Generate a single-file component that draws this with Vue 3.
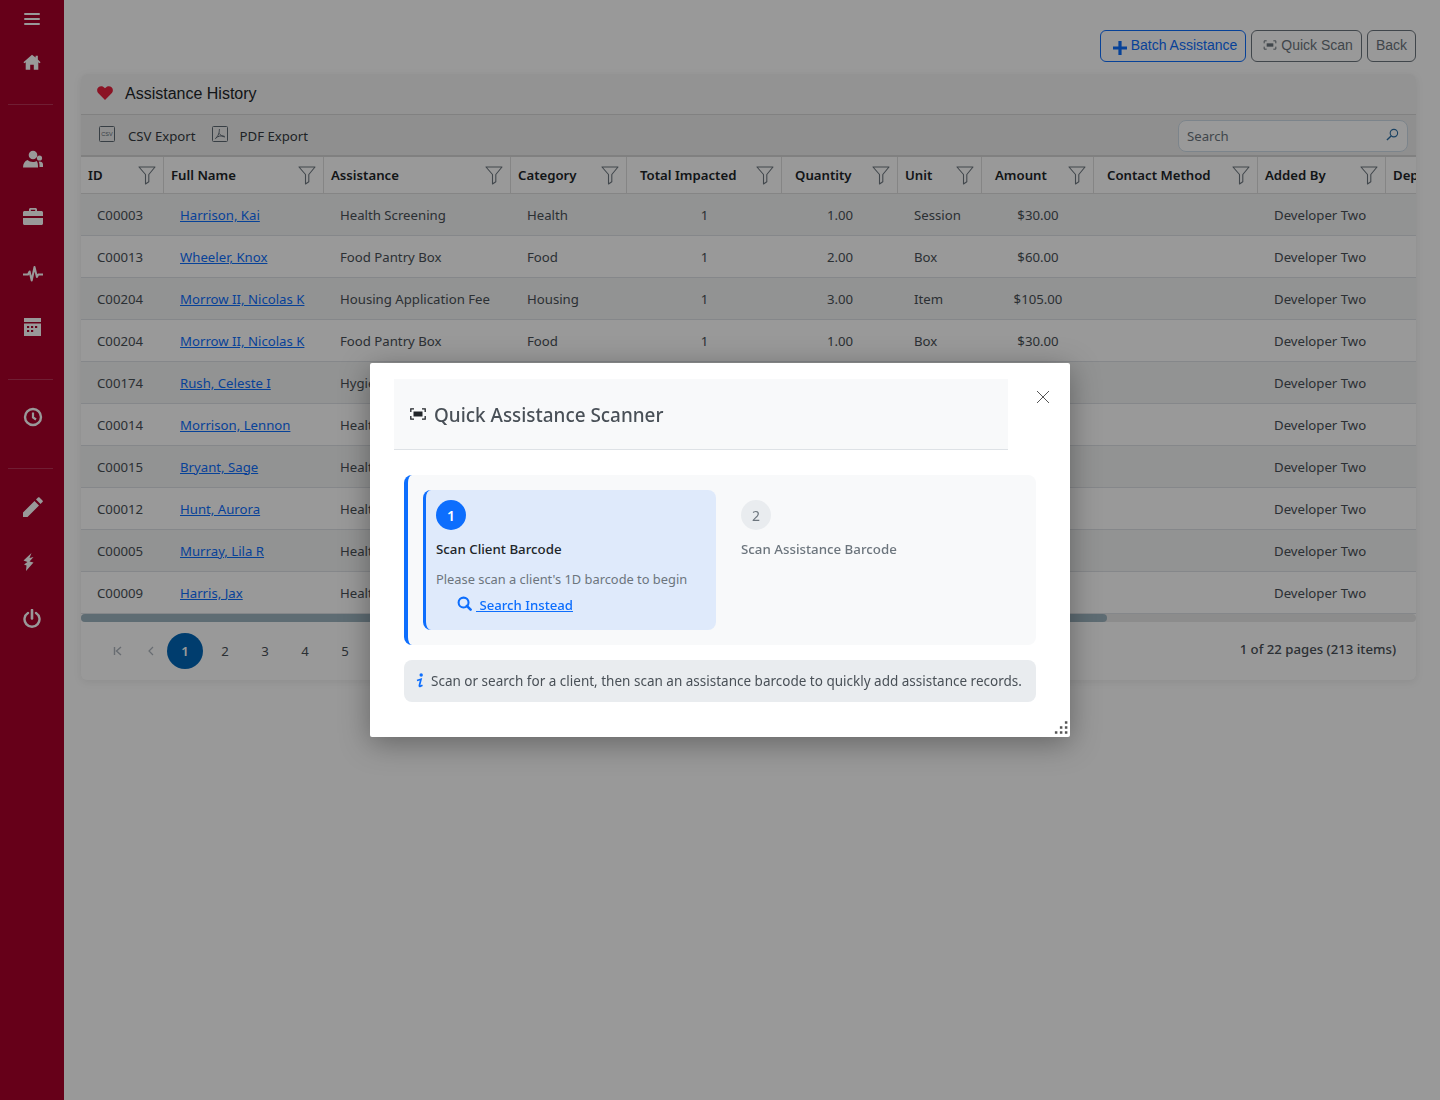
<template>
  <div class="page">
    <!-- left icon rail -->
    <aside class="rail">
      <svg class="rail-icon burger" viewBox="0 0 16 14"><path d="M1 2h14M1 7h14M1 12h14" stroke="#fff" stroke-width="2" stroke-linecap="round" fill="none" /></svg>
      <svg class="rail-icon home" viewBox="0 0 20 18"><path d="M10 1 0.5 9.2l1.1 1.2L3 9.300V17.500h5v-5.500h4v5.500h5V9.300l1.400 1.100 1.100-1.200L16.500 6.200V2h-2.500v2L10 1z" fill="#fff" /></svg>
      <hr class="rail-line" />
      <svg class="rail-icon users" viewBox="0 0 20 18"><circle cx="10" cy="5" r="4.300" fill="#fff" /><path d="M0 17.500c0-4 1.800-6.500 4.500-7.500 1.300 1.300 3.200 2 5.500 2 1.500 0 2.600-.4 3.500-1 1.300.9 1.500 3.500 1.500 6.500H0z" fill="#fff" /><circle cx="16.500" cy="8" r="2.600" fill="#fff" /><path d="M16.500 11.500c2 0 3.500 1 3.500 3v2.500h-3.500c0-2 0-4-.8-5.300z" fill="#fff" /></svg>
      <svg class="rail-icon case" viewBox="0 0 20 18"><path d="M6 4V2.500C6 1.500 6.800 1 7.600 1h4.800c.8 0 1.600.5 1.600 1.500V4h4.500c.8 0 1.500.6 1.500 1.500V9H0V5.500C0 4.600.7 4 1.500 4H6zm1.800 0h4.400V2.800H7.800V4zM0 11h20v5.500c0 .9-.7 1.500-1.500 1.500h-17C.7 18 0 17.400 0 16.500V11z" fill="#fff" /></svg>
      <svg class="rail-icon pulse" viewBox="0 0 20 16"><path d="M0.500 8.500h4.500l1.600-3 2.100 9 2.800-13.500 2.400 10 1.300-2.500h4.300" stroke="#fff" stroke-width="2" fill="none" stroke-linejoin="round" stroke-linecap="round" /></svg>
      <svg class="rail-icon calc" viewBox="0 0 17 18"><path d="M0 0h17v4H0zM0 5.500h17V18H0zM3 8v2h2.200V8zm4 0v2h2.200V8zm4 0v2h2.200V8zm-8 4v2h2.200v-2zm4 0v2h2.200v-2z" fill="#fff" fill-rule="evenodd" /></svg>
      <hr class="rail-line second" />
      <svg class="rail-icon clock" viewBox="0 0 20 20"><circle cx="10" cy="10" r="8" stroke="#fff" stroke-width="2.400" fill="none" /><path d="M10 5.500v5l3 2" stroke="#fff" stroke-width="2.200" fill="none" /></svg>
      <hr class="rail-line third" />
      <svg class="rail-icon pencil" viewBox="0 0 20 20"><path d="M0 20v-4.500L11.500 4l4.500 4.500L4.500 20H0zM13 2.500 15 .5c.5-.5 1-.5 1.500 0l3 3c.5.500.5 1 0 1.500l-2 2L13 2.500z" fill="#fff" /></svg>
      <svg class="rail-icon bolt" viewBox="0 0 11 18"><path d="M8.500 0 0.500 7.500 4.500 9 1 11.500 3.500 12.500 3 18 10.500 9.500 6.500 8.500 10.500 4 6.500 5z" fill="#fff" /></svg>
      <svg class="rail-icon power" viewBox="0 0 18 20"><path d="M5 3.900a7.500 7.500 0 1 0 8 0" stroke="#fff" stroke-width="2.400" fill="none" stroke-linecap="round" /><path d="M9 1v8.500" stroke="#fff" stroke-width="2.600" stroke-linecap="round" /></svg>
    </aside>

    <main class="content">
      <div class="top-actions">
        <button class="btn btn-blue">
          <svg class="plus" viewBox="0 0 14 14"><path d="M5.400 0h3.200v5.400H14v3.200H8.600V14H5.400V8.600H0V5.400h5.400z" fill="currentColor" /></svg>
          Batch Assistance
        </button>
        <button class="btn btn-grey">
          <svg class="scan-small" viewBox="0 0 16 12"><path d="M1 4V1h3M12 1h3v3M15 8v3h-3M4 11H1V8" stroke="currentColor" stroke-width="1.200" fill="none" /><rect x="4" y="4" width="8" height="4" fill="currentColor" /></svg>
          Quick Scan
        </button>
        <button class="btn btn-grey">Back</button>
      </div>

      <section class="card">
        <div class="card-head">
          <svg class="heart" viewBox="0 0 18 16"><path d="M9 16 1.700 8.600C-.5 6.400-.5 3.200 1.500 1.400 3.400-.4 6.300-.2 8 1.600L9 2.700l1-1.100C11.700-.2 14.600-.4 16.500 1.400c2 1.800 2 5 -.2 7.200L9 16z" fill="#e8213d" /></svg>
          <span>Assistance History</span>
        </div>
        <div class="toolbar">
          <a class="export">
            <svg class="file" viewBox="0 0 16 16"><rect x=".5" y=".5" width="15" height="15" rx="1" fill="none" stroke="currentColor" /><text x="8" y="10.300" text-anchor="middle" class="file-text">CSV</text></svg>
            CSV Export
          </a>
          <a class="export">
            <svg class="file pdf" viewBox="0 0 16 16"><rect x=".5" y=".5" width="15" height="15" rx="1" fill="none" stroke="currentColor" /><path d="M7.500 3c-.5 2 .5 5-4 9.500M7.500 7.500c1 1.800 2.500 3 5.500 3.500M3.500 12.500c2-2.500 6-3.300 9-2.200" fill="none" stroke="currentColor" stroke-width="1" /></svg>
            PDF Export
          </a>
          <div class="search">
            <span>Search</span>
            <svg class="search-ico" viewBox="0 0 14 14"><circle cx="8.500" cy="5.500" r="4" fill="none" stroke="#2c6fa5" stroke-width="1.200" /><path d="M5.500 8.500 1 13" stroke="#2c6fa5" stroke-width="1.500" /></svg>
          </div>
        </div>

        <div class="table-wrap">
          <table class="grid">
            <colgroup>
              <col v-for="c in columns" :key="c.label" :style="{ width: c.width + 'px' }" />
            </colgroup>
            <thead>
              <tr>
                <th v-for="c in columns" :key="c.label" :class="{ wide: c.wide }">
                  <div class="th-in">
                    <span>{{ c.label }}</span>
                    <svg class="funnel" viewBox="0 0 18 19"><path d="M1 1h16l-6.200 7.500v7.200L7.500 18V8.500L1 1z" fill="none" stroke="#6f7880" stroke-width="1.100" stroke-linejoin="round" /></svg>
                  </div>
                </th>
              </tr>
            </thead>
            <tbody>
              <tr v-for="(r, i) in rows" :key="i">
                <td>{{ r.id }}</td>
                <td><a class="name">{{ r.name }}</a></td>
                <td>{{ r.assistance }}</td>
                <td>{{ r.category }}</td>
                <td class="mid">{{ r.total }}</td>
                <td class="mid">{{ r.qty }}</td>
                <td>{{ r.unit }}</td>
                <td class="mid">{{ r.amount }}</td>
                <td></td>
                <td>Developer Two</td>
                <td></td>
              </tr>
            </tbody>
          </table>
        </div>
        <div class="scroll-track"><div class="scroll-thumb"></div></div>

        <div class="pager">
          <div class="pages">
            <span class="pg dim">
              <svg class="chev" viewBox="0 0 10 10"><path d="M1.500 1v8M8 1 3.500 5 8 9" fill="none" stroke="currentColor" stroke-width="1.400" /></svg>
            </span>
            <span class="pg dim prev">
              <svg class="chev" viewBox="0 0 10 10"><path d="M7 1 3 5l4 4" fill="none" stroke="currentColor" stroke-width="1.200" /></svg>
            </span>
            <span class="pg active">1</span>
            <span v-for="n in [2, 3, 4, 5]" :key="n" class="pg">{{ n }}</span>
          </div>
          <div class="page-info">1 of 22 pages (213 items)</div>
        </div>
      </section>
    </main>

    <div class="backdrop"></div>

    <div class="dialog">
      <div class="dialog-top">
        <div class="dialog-title">
          <svg class="scan-title" viewBox="0 0 16 12"><path d="M.8 4V.8H4M12 .8h3.200V4M15.200 8v3.200H12M4 11.200H.8V8" stroke="#212529" stroke-width="1.300" fill="none" /><rect x="3.500" y="3.500" width="9" height="5" fill="#212529" /></svg>
          <h5>Quick Assistance Scanner</h5>
        </div>
        <button class="close-x">
          <svg viewBox="0 0 14 14"><path d="M1 1l12 12M13 1 1 13" stroke="#555" stroke-width="1" fill="none" /></svg>
        </button>
      </div>

      <div class="dialog-body">
        <div class="steps">
          <div class="step current">
            <div class="circle">1</div>
            <div class="step-title">Scan Client Barcode</div>
            <p class="step-desc">Please scan a client's 1D barcode to begin</p>
            <a class="step-link">
              <svg class="find" viewBox="0 0 16 16"><circle cx="7" cy="7" r="5.300" fill="none" stroke="currentColor" stroke-width="2.200" /><path d="M10.500 10.500 14.500 14.500" stroke="currentColor" stroke-width="2.800" stroke-linecap="round" /></svg>
              <span>&nbsp;Search Instead</span>
            </a>
          </div>
          <div class="step">
            <div class="circle off">2</div>
            <div class="step-title off-text">Scan Assistance Barcode</div>
          </div>
        </div>

        <div class="hint">
          <svg class="info" viewBox="0 0 8 16"><circle cx="5.200" cy="2" r="1.700" fill="currentColor" /><path d="M1 7.500 5 6.300 3.400 12.500c-.2.800.3 1.100 1 .8L6.500 12.200" fill="none" stroke="currentColor" stroke-width="1.700" /></svg>
          <span>Scan or search for a client, then scan an assistance barcode to quickly add assistance records.</span>
        </div>
      </div>

      <svg class="grip" viewBox="0 0 12 12"><g fill="#555"><rect x="9.500" y="1" width="2" height="2" /><rect x="5.500" y="5" width="2" height="2" /><rect x="9.500" y="5" width="2" height="2" /><rect x="1.500" y="9" width="2" height="2" /><rect x="5.500" y="9" width="2" height="2" /><rect x="9.500" y="9" width="2" height="2" /></g></svg>
    </div>
  </div>
</template>

<script setup>
const columns = [
  { label: 'ID', width: 82 },
  { label: 'Full Name', width: 160 },
  { label: 'Assistance', width: 187 },
  { label: 'Category', width: 116 },
  { label: 'Total Impacted', width: 155, wide: true },
  { label: 'Quantity', width: 116, wide: true },
  { label: 'Unit', width: 84 },
  { label: 'Amount', width: 112, wide: true },
  { label: 'Contact Method', width: 164, wide: true },
  { label: 'Added By', width: 128 },
  { label: 'Department', width: 130 },
]

const rows = [
  { id: 'C00003', name: 'Harrison, Kai', assistance: 'Health Screening', category: 'Health', total: 1, qty: '1.00', unit: 'Session', amount: '$30.00' },
  { id: 'C00013', name: 'Wheeler, Knox', assistance: 'Food Pantry Box', category: 'Food', total: 1, qty: '2.00', unit: 'Box', amount: '$60.00' },
  { id: 'C00204', name: 'Morrow II, Nicolas K', assistance: 'Housing Application Fee', category: 'Housing', total: 1, qty: '3.00', unit: 'Item', amount: '$105.00' },
  { id: 'C00204', name: 'Morrow II, Nicolas K', assistance: 'Food Pantry Box', category: 'Food', total: 1, qty: '1.00', unit: 'Box', amount: '$30.00' },
  { id: 'C00174', name: 'Rush, Celeste I', assistance: 'Hygiene' },
  { id: 'C00014', name: 'Morrison, Lennon', assistance: 'Health' },
  { id: 'C00015', name: 'Bryant, Sage', assistance: 'Health' },
  { id: 'C00012', name: 'Hunt, Aurora', assistance: 'Health' },
  { id: 'C00005', name: 'Murray, Lila R', assistance: 'Health' },
  { id: 'C00009', name: 'Harris, Jax', assistance: 'Health' },
]
</script>

<style>
html, body {
  background: #fff;
}
</style>

<style scoped>
.page {
  display: flex;
  min-height: 1100px;
  font-family: "Noto Sans", sans-serif;
  font-size: 13.2px;
  color: #495057;
}

/* rail */
.rail {
  width: 64px;
  flex: none;
  background: #aa002b;
  display: flex;
  flex-direction: column;
  align-items: center;
  padding-top: 12px;
  box-sizing: border-box;
}
.rail-icon {
  display: block;
  flex: none;
}
.burger { width: 16px; height: 14px; }
.home { width: 18px; height: 18px; margin-top: 27px; }
.rail-line {
  width: 45px;
  height: 1px;
  border: 0;
  background: rgba(255, 255, 255, 0.2);
  margin: 33px 0 0 -3px;
}
.users { width: 20px; height: 18px; margin-top: 45px; margin-left: 2px; }
.case { width: 20px; height: 18px; margin-top: 39px; margin-left: 2px; }
.pulse { width: 20px; height: 16px; margin-top: 41px; margin-left: 2px; }
.calc { width: 17px; height: 18px; margin-top: 36px; }
.second { margin-top: 43px; }
.clock { width: 20px; height: 20px; margin-top: 27px; margin-left: 2px; }
.third { margin-top: 41px; }
.pencil { width: 20px; height: 20px; margin-top: 28px; margin-left: 1px; }
.bolt { width: 11px; height: 18px; margin-top: 36px; margin-left: -7px; }
.power { width: 18px; height: 20px; margin-top: 38px; }

.content {
  flex: 1;
  min-width: 0;
  padding: 30px 24px 0 17px;
}

.top-actions {
  display: flex;
  justify-content: flex-end;
  gap: 5px;
  height: 32px;
  margin-bottom: 12px;
}
.btn {
  display: flex;
  align-items: center;
  height: 32px;
  box-sizing: border-box;
  padding: 0 8px 2px;
  border-radius: 6px;
  background: transparent;
  font-family: "Liberation Sans", Arial, sans-serif;
  font-size: 14px;
  border: 1px solid;
}
.btn-blue { color: #0d6efd; border-color: #0d6efd; padding: 0 8px 2px 12px; }
.btn-grey { color: #6c757d; border-color: #6c757d; }
.plus { width: 14px; height: 14px; margin-right: 4px; margin-top: 5px; }
.scan-small { width: 14px; height: 10px; margin: 0 4px 0 3px; }

.card {
  background: #fff;
  border-radius: 6px;
  overflow: hidden;
  box-shadow: 0 2px 8px rgba(0, 0, 0, 0.08);
}
.card-head {
  display: flex;
  align-items: center;
  height: 41px;
  box-sizing: border-box;
  padding-left: 16px;
  background: #f5f5f5;
  border-bottom: 1px solid #d8d8d8;
  font-family: "Liberation Sans", Arial, sans-serif;
  font-size: 16px;
  color: #212529;
}
.heart { width: 16px; height: 14px; margin-right: 12px; margin-top: -3px; }
.toolbar {
  display: flex;
  align-items: center;
  height: 42px;
  box-sizing: border-box;
  padding: 2px 8px 0 18px;
  background: #efefef;
  border-bottom: 2px solid #d6d6d6;
}
.export {
  display: flex;
  align-items: center;
  color: #343a40;
  margin-right: 16px;
}
.file {
  width: 16px;
  height: 16px;
  margin-right: 13px;
  margin-top: -5px;
  color: #5e6a74;
}
.pdf { margin-right: 12px; }
.file-text {
  font-family: "Liberation Sans", Arial, sans-serif;
  font-size: 5.500px;
  fill: #5e6a74;
}
.search {
  margin-left: auto;
  width: 230px;
  height: 32px;
  box-sizing: border-box;
  display: flex;
  align-items: center;
  justify-content: space-between;
  padding: 0 8px;
  background: #fff;
  border: 1px solid #cfdde8;
  border-radius: 8px;
  color: #6c757d;
}
.search-ico { width: 13px; height: 13px; margin-top: -3px; }

.table-wrap {
  overflow: hidden;
}
.grid {
  border-collapse: separate;
  border-spacing: 0;
  table-layout: fixed;
  width: 1434px;
}
.grid th {
  height: 37px;
  padding: 0 7px;
  border-bottom: 1px solid #dedede;
  box-sizing: border-box;
  text-align: left;
  font-weight: 600;
  color: #212529;
  background: #fff;
}
.grid th:not(:first-child) { border-left: 1px solid #dedede; }
.grid th.wide { padding-left: 13px; }
.th-in {
  display: flex;
  align-items: center;
  justify-content: space-between;
  white-space: nowrap;
}
.funnel { width: 18px; height: 19px; flex: none; }
.grid td {
  height: 42px;
  padding: 0 8px 0 17px;
  box-sizing: border-box;
  border-bottom: 1px solid #dee2e6;
  white-space: nowrap;
  overflow: hidden;
}
.grid td:first-child { padding-left: 16px; }
.grid td.mid { text-align: center; padding: 0 0 0 2px; }
.grid tbody tr:nth-child(odd) td { background: #f4f5f6; }
.name {
  color: #0d6efd;
  text-decoration: underline;
}

.scroll-track {
  height: 8px;
  background: #e9e9e9;
  border-radius: 4px;
}
.scroll-thumb {
  width: 1026px;
  height: 8px;
  border-radius: 4px;
  background: #9db4c0;
}

.pager {
  display: flex;
  align-items: center;
  justify-content: space-between;
  height: 58px;
  padding: 0 20px 0 18px;
}
.pages {
  display: flex;
  align-items: center;
  gap: 4px;
}
.pg {
  width: 36px;
  height: 36px;
  border-radius: 50%;
  display: flex;
  align-items: center;
  justify-content: center;
}
.dim { color: #adb5bd; }
.dim .chev { margin-left: 2px; }
.prev { margin-left: -7px; margin-right: -5px; }
.chev { width: 10px; height: 10px; }
.active {
  background: #0067b8;
  color: #fff;
  font-weight: 600;
}
.page-info {
  font-weight: 500;
  color: #495057;
  margin-bottom: 4px;
}

/* dim layer + dialog */
.backdrop {
  position: fixed;
  inset: 0;
  background: rgba(0, 0, 0, 0.4);
}
.dialog {
  position: absolute;
  left: 370px;
  top: 363px;
  width: 700px;
  height: 374px;
  background: #fff;
  border-radius: 2px;
  box-shadow: 0 6px 30px rgba(0, 0, 0, 0.35);
}
.dialog-top {
  display: flex;
  align-items: flex-start;
  padding: 16px 9px 0 24px;
}
.dialog-title {
  flex: 1;
  display: flex;
  align-items: center;
  height: 71px;
  box-sizing: border-box;
  padding: 1px 0 0 16px;
  background: #f8f9fa;
  border-bottom: 1px solid #dee2e6;
}
.scan-title { width: 16px; height: 12px; margin-right: 8px; margin-top: -2px; }
.dialog-title h5 {
  margin: 0;
  font-size: 18.9px;
  font-weight: 500;
  color: #495057;
}
.close-x {
  width: 36px;
  height: 36px;
  margin-left: 17px;
  padding: 0;
  border: 0;
  background: none;
  display: flex;
  align-items: center;
  justify-content: center;
}
.close-x svg { width: 14px; height: 14px; }

.dialog-body {
  padding: 25px 34px 0;
}
.steps {
  display: flex;
  height: 170px;
  box-sizing: border-box;
  padding: 15px;
  background: #f8f9fa;
  border-left: 4px solid #0d6efd;
  border-radius: 8px;
  gap: 12px;
}
.step {
  width: 293px;
  box-sizing: border-box;
  padding: 10px 13px;
  border-radius: 8px;
}
.step.current {
  background: #dfeafb;
  border-left: 3px solid #0d6efd;
  padding-left: 10px;
}
.circle {
  width: 30px;
  height: 30px;
  border-radius: 50%;
  background: #0d6efd;
  color: #fff;
  font-weight: 600;
  font-size: 14px;
  display: flex;
  align-items: center;
  justify-content: center;
}
.circle.off {
  background: #e9ecef;
  color: #6c757d;
  font-weight: 400;
}
.step-title {
  margin-top: 9px;
  font-size: 13.3px;
  line-height: 20px;
  font-weight: 500;
  color: #212529;
}
.off-text { color: #6c757d; }
.step-desc {
  margin: 10px 0 0;
  font-size: 12.85px;
  line-height: 20px;
  color: #6c757d;
}
.step-link {
  display: flex;
  align-items: center;
  margin: 6px 0 0 21px;
  color: #0d6efd;
  font-weight: 500;
  line-height: 20px;
}
.step-link span { text-decoration: underline; }
.find { width: 15px; height: 15px; margin-right: 4px; margin-top: -3px; }

.hint {
  display: flex;
  align-items: center;
  margin-top: 15px;
  height: 42px;
  padding-left: 12px;
  background: #e9ecef;
  border-radius: 8px;
  color: #495057;
  font-size: 13.5px;
}
.info { width: 8px; height: 16px; margin-right: 7px; color: #0d6efd; }

.grip {
  position: absolute;
  right: 2px;
  bottom: 2px;
  width: 15px;
  height: 15px;
}
</style>
